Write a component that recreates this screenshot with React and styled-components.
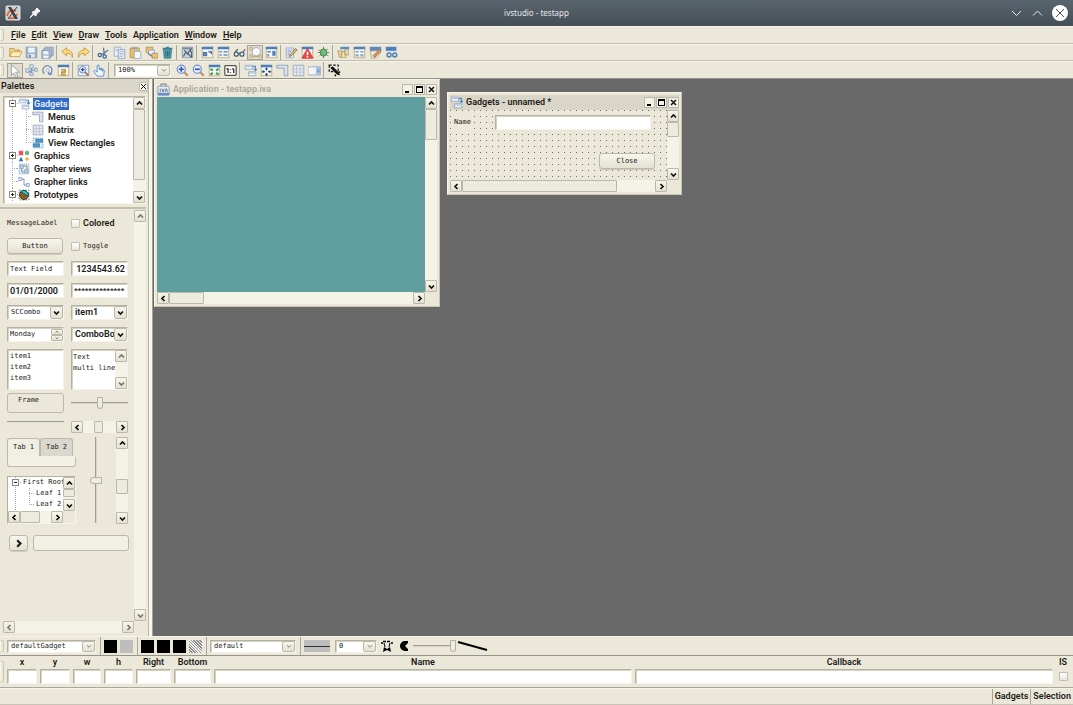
import React from "react";
import styled, { createGlobalStyle, css } from "styled-components";

const GlobalStyle = createGlobalStyle`
  * { box-sizing: border-box; }
  body {
    margin: 0;
    background: #ebe8d9;
    color: #1b1a17;
    font: 600 9px/13px Roboto, "Liberation Sans", sans-serif;
  }
  button, input, select, textarea {
    font: inherit;
    color: inherit;
    margin: 0;
    padding: 0;
    border: 0;
    border-radius: 0;
    background: none;
    outline: none;
  }
  ul { list-style: none; margin: 0; padding: 0; }
  svg { display: block; flex: none; }
`;

const mono = css`
  font-family: "DejaVu Sans Mono", "Liberation Mono", monospace;
  font-weight: 400;
  font-size: 7px;
`;

const sunken = css`
  background: #fff;
  border: 1px solid;
  border-color: #b5b2a3 #f6f4e9 #f6f4e9 #b5b2a3;
  box-shadow: inset 1px 1px 0 #d5d2c3;
`;

const raised = css`
  background: linear-gradient(#f8f6ec, #e4e1d3);
  border: 1px solid #bbb8aa;
  border-radius: 2px;
`;

const Shell = styled.div`
  display: flex;
  flex-direction: column;
  min-height: 100vh;
`;

/* ---------- title bar ---------- */

const TitleBar = styled.header`
  display: grid;
  grid-template-columns: 1fr auto 1fr;
  align-items: center;
  height: 26px;
  padding: 0 5px;
  background: linear-gradient(#59656e, #454e56);
  color: #e6e8ea;
  font: 400 8px/12px "Noto Sans", sans-serif;
`;

const TitleSide = styled.div`
  display: flex;
  align-items: center;
  gap: 8px;
  justify-content: ${(p) => (p.$end ? "flex-end" : "flex-start")};
`;

const PlainButton = styled.button`
  display: flex;
  align-items: center;
  justify-content: center;
`;

/* ---------- menu and toolbars ---------- */

const Bar = styled.div`
  display: flex;
  align-items: center;
  height: ${(p) => p.$height}px;
  border-top: 1px solid #f6f4ea;
  border-bottom: 1px solid ${(p) => (p.$dark ? "#96948a" : "#c1beb1")};
`;

const Handle = styled.span`
  flex: none;
  align-self: ${(p) => (p.$tall ? "stretch" : "center")};
  width: 4px;
  height: ${(p) => (p.$tall ? "auto" : "12px")};
  margin: ${(p) => (p.$tall ? "5px 3px 5px 0" : "0 3px 0 0")};
  border: 1px solid #c9c6b8;
  border-left-color: #f6f4ea;
  border-radius: 2px;
`;

const Menu = styled.nav`
  display: flex;
  gap: 6px;
  padding-left: 4px;
`;

const Separator = styled.span`
  flex: none;
  align-self: stretch;
  width: ${(p) => (p.$wide ? 2 : 4)}px;
  margin: ${(p) => (p.$wide ? "0 3px" : "0")};
  background: linear-gradient(90deg, transparent 1px, #a9a69a 1px, #a9a69a 2px, transparent 2px);
`;

const IconButton = styled.button`
  display: flex;
  align-items: center;
  justify-content: center;
  width: 16px;
  height: 15px;
  border: 1px solid ${(p) => (p.$active ? "#a5a295" : "transparent")};
  background: ${(p) => (p.$active ? "#e0ddce" : "none")};
`;

/* ---------- form parts ---------- */

const Field = styled.input`
  ${sunken}
  ${(p) => p.$mono && mono}
  ${(p) => p.$masked && css`font-size: 8px;`}
  width: 100%;
  min-width: 0;
  height: 15px;
  padding: 0 2px;
  text-align: ${(p) => p.$align || "left"};
`;

const ComboBox = styled.span`
  ${sunken}
  display: flex;
  align-items: center;
  width: ${(p) => (p.$width ? p.$width + "px" : "100%")};
  min-width: 0;
  height: ${(p) => (p.$width ? 13 : 15)}px;
  margin: ${(p) => (p.$spaced ? "0 3px" : "0")};

  select {
    ${(p) => p.$mono && mono}
    flex: 1;
    min-width: 0;
    height: 11px;
    padding-left: 3px;
    line-height: 11px;
    appearance: none;
    overflow: hidden;
  }
`;

const ComboArrow = styled.span`
  ${raised}
  display: flex;
  align-items: center;
  justify-content: center;
  width: 13px;
  height: ${(p) => (p.$tall ? 13 : 11)}px;
  color: ${(p) => (p.$dim ? "#77756c" : "#111")};
`;

const CheckLabel = styled.label`
  display: flex;
  align-items: center;
  gap: 3px;
  ${(p) => p.$mono && mono}
`;

const Check = styled.input`
  appearance: none;
  width: 9px;
  height: 9px;
  border: 1px solid #bfbcae;
  border-radius: 1px;
  background: linear-gradient(#fff, #e9e6da);
`;

const PushButton = styled.button`
  ${raised}
  ${mono}
  display: flex;
  align-items: center;
  justify-content: center;
  width: ${(p) => p.$width || 56}px;
  height: 16px;
  border-radius: 3px;
  box-shadow: 0 1px 0 #cfccbd;
`;

const Range = styled.input`
  appearance: none;
  width: ${(p) => (p.$vertical ? "12px" : (p.$width || 57) + "px")};
  height: ${(p) => (p.$vertical ? "86px" : "13px")};
  writing-mode: ${(p) => (p.$vertical ? "vertical-lr" : "horizontal-tb")};
  background: linear-gradient(
      ${(p) => (p.$vertical ? "90deg" : "180deg")},
      #a09d91 1px,
      #d8d5c6 1px
    )
    center / ${(p) => (p.$vertical ? "2px 100%" : "100% 2px")} no-repeat;

  &::-webkit-slider-thumb {
    appearance: none;
    width: ${(p) => (p.$vertical ? 12 : 6)}px;
    height: ${(p) => (p.$vertical ? 7 : 12)}px;
    border: 1px solid #b5b2a4;
    border-radius: ${(p) => (p.$vertical ? "5px 1px 1px 5px" : "1px 1px 4px 4px")};
    background: #eeecdf;
  }
`;

/* ---------- scroll bars ---------- */

const ScrollTrack = styled.div`
  display: flex;
  flex-direction: ${(p) => (p.$vertical ? "column" : "row")};
  width: ${(p) => (p.$vertical ? "12px" : "auto")};
  height: ${(p) => (p.$vertical ? "auto" : "12px")};
  min-width: 0;
  min-height: 0;
  background: #f5f3e7;
`;

const ScrollArrow = styled.button`
  ${raised}
  display: flex;
  align-items: center;
  justify-content: center;
  flex: none;
  width: 12px;
  height: 12px;
  border-radius: 1px;
  color: ${(p) => (p.$dim ? "#77756c" : "#111")};
`;

const ScrollRoom = styled.div`
  display: flex;
  flex: 1;
  flex-direction: inherit;
  min-width: 0;
  min-height: 0;
`;

const ScrollThumb = styled.div`
  ${raised}
  flex: none;
  border-radius: 1px;
  background: #edeade;
  ${(p) =>
    p.$vertical
      ? css`height: ${p.$size}; margin-top: ${p.$start}px;`
      : css`width: ${p.$size}; margin-left: ${p.$start}px;`}
`;

/* ---------- main area ---------- */

const Main = styled.main`
  display: flex;
  flex: 1;
`;

const Sidebar = styled.aside`
  display: flex;
  flex-direction: column;
  flex: none;
  width: 153px;
  padding-right: 4px;
  border-right: 1px solid #a5a296;
  background: linear-gradient(90deg, #ebe8d9 148px, #b9b6a8 148px, #b9b6a8 149px, #f7f5ec 149px);
`;

const PaletteTitle = styled.h2`
  display: flex;
  align-items: center;
  justify-content: space-between;
  height: 14px;
  margin: 0;
  padding: 0 0 0 1px;
  background: #d9d6c9;
  font: inherit;
`;

const SmallClose = styled.button`
  ${raised}
  display: flex;
  align-items: center;
  justify-content: center;
  width: 9px;
  height: 9px;
  background: #f7f5ec;
`;

const TreeBox = styled.div`
  ${sunken}
  display: flex;
  height: 108px;
  margin: 3px 2px 0 3px;
`;

const Tree = styled.ul`
  flex: 1;
  min-width: 0;
  padding-left: 4px;
  overflow: hidden;
  white-space: nowrap;

  > li {
    background: repeating-linear-gradient(#aaa 0 1px, transparent 1px 2px) 4px 0 / 1px 100% no-repeat;
  }

  ul {
    margin-left: 18px;
    background: repeating-linear-gradient(#aaa 0 1px, transparent 1px 2px) 0 0 / 1px calc(100% - 6px) no-repeat;
  }
`;

const TreeRow = styled.div`
  display: flex;
  align-items: center;
  height: ${(p) => p.$height || 13}px;
  ${(p) => p.$mono && mono}
`;

const Dots = styled.span`
  flex: none;
  width: ${(p) => p.$width}px;
  height: 1px;
  margin: 0 ${(p) => p.$after || 0}px 0 ${(p) => p.$indent || 0}px;
  background: repeating-linear-gradient(90deg, #aaa 0 1px, transparent 1px 2px);
`;

const Expander = styled.button`
  flex: none;
  width: 7px;
  height: 7px;
  margin: 0 1px;
  border: 1px solid #8b897f;
  background:
    linear-gradient(#222, #222) center / 3px 1px no-repeat,
    ${(p) => (p.$open ? "" : "linear-gradient(#222, #222) center / 1px 3px no-repeat,")}
    #fff;
`;

const NodeLabel = styled.span`
  margin-left: 3px;
  padding: 0 1px;
  line-height: 12px;
  background: ${(p) => (p.$selected ? "#316ac5" : "none")};
  color: ${(p) => (p.$selected ? "#e8eefa" : "inherit")};
`;

const Splitter = styled.div`
  height: 5px;
  margin-right: 2px;
  border-bottom: 2px solid #c2bfb1;
`;

const PalettePane = styled.section`
  display: grid;
  grid-template: 1fr 13px / 1fr 12px;
  flex: 1;
  padding: 1px 2px 2px 3px;
`;

const Samples = styled.div`
  display: flex;
  flex-direction: column;
  align-items: flex-start;
  padding: 6px 0 0 4px;
`;

const SampleGrid = styled.div`
  display: grid;
  grid-template-columns: 57px 57px;
  grid-auto-rows: minmax(15px, auto);
  gap: 7px;
  align-items: center;
`;

const LowerGrid = styled(SampleGrid)`
  grid-auto-rows: auto;
  gap: 8px 7px;
  margin-top: 3px;
`;

const SpinBox = styled.span`
  ${sunken}
  display: flex;
  align-items: center;
  height: 15px;

  input {
    ${mono}
    flex: 1;
    min-width: 0;
    padding-left: 2px;
  }
`;

const SpinButtons = styled.span`
  display: flex;
  flex-direction: column;

  button {
    ${raised}
    width: 12px;
    height: 6px;
    border-radius: 1px;
    display: flex;
    align-items: center;
    justify-content: center;
    color: #77756c;
  }
`;

const ListBox = styled.ul`
  ${sunken}
  ${mono}
  height: 41px;
  padding: 1px 2px;
  line-height: 11px;
`;

const TextBox = styled.div`
  ${sunken}
  display: flex;
  height: 41px;

  textarea {
    ${mono}
    flex: 1;
    min-width: 0;
    padding: 2px 0 0 1px;
    line-height: 11px;
    resize: none;
    overflow: hidden;
    white-space: pre;
  }
`;

const FrameBox = styled.div`
  ${raised}
  ${mono}
  height: 20px;
  padding-left: 10px;
  line-height: 12px;
  border-radius: 3px;
  background: none;
`;

const Rule = styled.hr`
  align-self: start;
  width: 100%;
  height: 1px;
  margin: 0;
  border: 0;
  background: #9a9a97;
`;

const MixedRow = styled.div`
  display: grid;
  grid-template-columns: 69px 12px 12px;
  column-gap: 14px;
  margin-top: 4px;
`;

const MixedColumn = styled.div`
  display: flex;
  flex-direction: column;
  gap: 9px;
  padding-top: 1px;
`;

const TabBox = styled.div`
  ${mono}
`;

const TabList = styled.div`
  display: flex;
  align-items: stretch;
  height: 18px;
`;

const Tab = styled.button`
  ${mono}
  width: 33px;
  border: 1px solid #bbb8aa;
  border-bottom: 0;
  border-radius: 3px 3px 0 0;
  background: ${(p) => (p.$active ? "#f1efe3" : "#dad7ce")};
`;

const TabPanel = styled.div`
  height: 11px;
  border: 1px solid #bbb8aa;
  border-top-color: #f1efe3;
  border-radius: 0 2px 3px 3px;
  background: #f3f1e6;
`;

const MiniTree = styled.div`
  ${sunken}
  display: grid;
  grid-template: 1fr 12px / 1fr 12px;
  height: 48px;
  background: #ebe8d9;

  > ul {
    padding-left: 3px;
    background: #fff;
  }
`;

const ActionRow = styled.div`
  display: flex;
  gap: 5px;
  margin: 11px 0 0 2px;
`;

const ProgressBox = styled.div`
  ${raised}
  width: 96px;
  height: 16px;
  border-radius: 3px;
  background: #f2f0e5;
`;

/* ---------- inner windows ---------- */

const Desktop = styled.section`
  position: relative;
  flex: 1;
  background: #696969;
`;

const InnerWindow = styled.article`
  position: absolute;
  left: ${(p) => p.$left}px;
  top: ${(p) => p.$top}px;
  display: grid;
  grid-template: 15px 1fr 12px / 1fr 12px;
  width: ${(p) => p.$width}px;
  height: ${(p) => p.$height}px;
  padding: 2px;
  border: 1px solid #f6f4e9;
  border-right-color: #c6c3b4;
  border-bottom-color: #c6c3b4;
  background: #ebe8d9;
`;

const WindowTitle = styled.header`
  grid-column: 1 / -1;
  display: flex;
  align-items: center;
  gap: 3px;
  background: ${(p) => (p.$active ? "#d9d6c8" : "none")};
  color: ${(p) => (p.$active ? "inherit" : "#aaa79a")};

  h3 {
    flex: 1;
    margin: 0;
    font: inherit;
  }
`;

const WindowButtons = styled.div`
  display: flex;
  gap: 1px;
  color: #111;

  button {
    ${raised}
    width: 11px;
    height: 11px;
    border-radius: 0;
    background: #f4f2e7;
    display: flex;
    align-items: center;
    justify-content: center;
  }
`;

const Canvas = styled.div`
  background: #609ea0;
`;

/* two striped layers leave one dark pixel in every 6px cell */
const GridCanvas = styled.form`
  display: flex;
  flex-direction: column;
  justify-content: space-between;
  padding: 5px 12px 11px 4px;
  background:
    linear-gradient(90deg, transparent 1px, #ebe8d9 1px) 0 0 / 6px 6px,
    linear-gradient(transparent 1px, #ebe8d9 1px) 0 0 / 6px 6px,
    #6f6d64;
`;

const FormLine = styled.div`
  display: grid;
  grid-template-columns: 41px 156px;
  align-items: center;

  label {
    ${mono}
    justify-self: start;
    background: #ebe8d9;
  }
`;

const FormActions = styled.div`
  display: flex;
  justify-content: flex-end;
`;

/* ---------- bottom ---------- */

const Swatches = styled.div`
  display: flex;
  gap: 3px;
`;

const Swatch = styled.button`
  width: 13px;
  height: 13px;
  background: ${(p) => p.$fill};
`;

const LinePreview = styled.button`
  width: 26px;
  height: 12px;
  margin-right: 5px;
  background: linear-gradient(#333, #333) center / 100% 1px no-repeat #bdbdbd;
`;

const DrawTools = styled.div`
  display: flex;
  align-items: center;
  gap: 1px;
  padding-left: 2px;
`;

const Properties = styled.div`
  display: flex;
  height: 32px;
  border-bottom: 1px solid #aaa89c;
`;

const PropertyGrid = styled.div`
  display: grid;
  flex: 1;
  grid-template-columns: 30px 30px 28px 29px 35px 37px 1fr 1fr 14px;
  column-gap: 3px;
  padding-right: 3px;
`;

const Property = styled.div`
  display: flex;
  flex-direction: column;
  align-items: center;
  min-width: 0;
`;

const CheckSlot = styled.div`
  display: flex;
  align-items: center;
  height: 15px;
`;

const StatusBar = styled.footer`
  display: flex;
  justify-content: flex-end;
  height: 17px;
  border-top: 1px solid #f6f4ea;
  border-bottom: 1px solid #c6c3b5;

  span {
    padding: 0 2px;
    line-height: 15px;
    border-left: 1px solid #a5a296;
  }
`;

/* ---------- drawings ---------- */

const ARROWS = {
  up: "M1 4.5 3.5 2 6 4.5",
  down: "M1 2.5 3.5 5 6 2.5",
  left: "M4.5 1 2 3.5 4.5 6",
  right: "M2.5 1 5 3.5 2.5 6",
};

const Arrow = ({ to, size = 7, thin }) => (
  <svg width={size} height={size} viewBox="0 0 7 7" fill="none" stroke="currentColor" strokeWidth={thin ? 1 : 1.7}>
    <path d={ARROWS[to]} />
  </svg>
);

const Win = ({ children }) => (
  <>
    <rect x="1.5" y="1.5" width="13" height="13" fill="#f3f5f6" stroke="#bba873" />
    <path d="M1 1h14v3H1z" fill="#4a7fbe" />
    {children}
  </>
);

const glass = (
  <>
    <path d="m10 10 4.500 4.500" stroke="#c18b52" strokeWidth="2.500" />
    <circle cx="6.500" cy="6.500" r="5" fill="#e6edff" stroke="#7792cc" strokeWidth="1.500" />
  </>
);

const ICONS = {
  open: <><path d="M1 13V3h5l1 2h6v3" fill="#f6d78c" stroke="#b78a36" /><path d="m1 13 3-6h12l-3 6z" fill="#fff0bb" stroke="#c79a43" /></>,
  save: <><path d="M1.500 1.500h13v13h-13z" fill="#a0b5d2" stroke="#7f97bb" /><path d="M4 2h8v6H4z" fill="#eff4fa" /><path d="M4 10h8v4H4z" fill="#e4e8ec" /><path d="M5 11h2v3H5z" fill="#6079a0" /></>,
  saveAll: <><path d="M5 1.500h10v10H5z" fill="#c3cfdf" stroke="#7e93b3" /><path d="M3 3.500h10v10H3z" fill="#c3cfdf" stroke="#7e93b3" /><path d="M1 5.500h10v10H1z" fill="#b0c1d9" stroke="#7e93b3" /><path d="M3 6h6v4H3zM3 12h6v3H3z" fill="#eef2f7" /></>,
  undo: <path d="m1 7 6-5v3c5 0 8 3 7 9-1-4-3-5-7-5v3z" fill="#ffdc82" stroke="#c88f2c" />,
  redo: <path d="m15 7-6-5v3c-5 0-8 3-7 9 1-4 3-5 7-5v3z" fill="#ffdc82" stroke="#c88f2c" />,
  cut: <><path d="m5 11 9-6M9 11 8 2" stroke="#5b7695" strokeWidth="1.500" /><g fill="none" stroke="#3e6797" strokeWidth="1.500"><circle cx="3.500" cy="11" r="2" /><circle cx="9.500" cy="13" r="2" /></g></>,
  copy: <><path d="M1.500 1.500h8v11h-8z" fill="#eff3fa" stroke="#8fa6ca" /><path d="M6.500 4.500h8v11h-8z" fill="#eff3fa" stroke="#7f98c0" /><path d="M3 4h5M3 6h3M8 7h5M8 9h5M8 11h5M8 13h4" stroke="#a0b3cf" /></>,
  paste: <><path d="M1.500 2.500h11v12h-11z" fill="#e5bd74" stroke="#bd8e41" /><path d="M4 1h6v3H4z" fill="#9aa6b5" /><path d="M6.500 6.500h8v9h-8z" fill="#f5f7fb" stroke="#91a6c8" /></>,
  duplicate: <><path d="M1.500 1.500h8v7h-8z" fill="#eac37b" stroke="#b88f4a" /><path d="M4.500 5h7v6h-7z" fill="#eef2fa" stroke="#809bc6" /><path d="M8.500 9h7v6h-7z" fill="#eac37b" stroke="#b88f4a" /><path d="m4 9 5 4" stroke="#447" /></>,
  trash: <><path d="M3 4h10l-1 11H4z" fill="#549daf" stroke="#32778b" /><path d="M2 2h12v2H2zM6 1h4v1H6z" fill="#3b8396" /><path d="M6 6v7M8 6v7M10 6v7" stroke="#286577" /></>,
  test: <><path d="M1.500 1.500h13v13h-13z" fill="#c6d6e6" stroke="#8a979f" /><path d="M2 2h12v2H2z" fill="#6f8aa5" /><path d="m3 13 3-6 2 3 3-5 2 3v6M4 5l9 9M10 6l3-2" fill="none" stroke="#5a6269" strokeWidth="1.500" /></>,
  inspect: <Win><path d="M3 8h4v4H3zM9 7h4v3" fill="#6d91c8" stroke="#244f97" /></Win>,
  props: <Win><path d="M3 6h3v2H3zM3 10h3v2H3zM8 6h5v2H8zM8 10h5v2H8z" fill="#6c90c4" /></Win>,
  glasses: <g fill="none" stroke="#47627b" strokeWidth="1.500"><circle cx="4" cy="10" r="2.500" /><circle cx="11" cy="10" r="2.500" /><path d="M6 9h3M2 8l4-4M12 8l3-4" /></g>,
  lasso: <><circle cx="9" cy="7" r="5" fill="#f8f9fb" stroke="#9aa5b6" /><path d="M2 13h12" stroke="#a99f83" /><path d="M1 2h3v3H1zM1 11h3v3H1zM12 11h3v3h-3z" fill="#ffedb6" stroke="#b49b63" /></>,
  panels: <Win><path d="M3 6h4v2H3zM3 10h2v3H3zM9 6h4v6H9z" fill="#4f7ec1" /></Win>,
  edit: <><path d="M1.500 2.500h9v12h-9z" fill="#edf3fc" stroke="#87a0c4" /><path d="M3 5h6M3 7h5M3 9h3M3 11h5" stroke="#7898c8" /><path d="m6 11 7-8 2 2-7 7-3 1z" fill="#e8bb64" stroke="#866f43" /></>,
  alert: <Win><path d="M8 3 1 15h14z" fill="#e84642" stroke="#d73835" /><path d="M8 7v4m0 1v2" stroke="#fff" strokeWidth="2" /></Win>,
  bug: <><path d="m2 5 12 7M3 12l10-8M8 1v14M1 8h14" stroke="#567256" /><ellipse cx="8" cy="8" rx="4" ry="4.500" fill="#75b978" stroke="#2f7848" /></>,
  script: <><path d="M4 1h11v3H4z" fill="#5c8bc2" /><path d="M9 5h5v6H9zM6 7h5v7H6z" fill="#f7edcb" stroke="#ae945d" /><path d="M1 6h5l-1 8H3z" fill="#f0d795" stroke="#ae945d" /></>,
  split: <Win><path d="M3 6h4v2H3zM9 6h4v2H9zM3 10h4v3H3zM9 10h4v3H9z" fill="#8ba7c8" /></Win>,
  pencil: <><path d="M1 1h14v5H1z" fill="#5c88c2" /><path d="M2 6h12v3l-5 6H3z" fill="#f4eddc" stroke="#aa9f82" /><path d="m5 12 8-8 2 2-8 8z" fill="#da965d" stroke="#9b6b4e" /></>,
  gears: <><path d="M1 1h13v5H1z" fill="#4a80c0" /><path d="M2 6h11v5H2z" fill="#dce5ef" /><g fill="#c6d9ef" stroke="#4c74a0" strokeWidth="1.500"><circle cx="5" cy="11" r="2.500" /><circle cx="12" cy="11" r="2.500" /></g></>,
  pointer: <path d="M3 1v13l3-3 3 5 2-1-3-5h5z" fill="#fff" stroke="#8a96a4" />,
  nodes: <><path d="M2 9c4 3 7-4 12-1M8 2v12" fill="none" stroke="#7d98bb" strokeWidth="1.500" /><path d="M6 1h4v4H6zM1 6h4v4H1zM12 5h3v4h-3zM6 11h4v3H6z" fill="#e4edf7" stroke="#7a96bb" /></>,
  rotate: <><path d="M4 12C-1 6 6-1 12 4c3 3 1 7-2 9m-1-4 1 4 4-1" fill="none" stroke="#6a86b5" strokeWidth="1.500" /><circle cx="8" cy="8" r="2" fill="#fff" stroke="#90a5c5" /></>,
  number: <Win><path d="M5 7h5v3H6v3h5" fill="none" stroke="#c69232" strokeWidth="2" /></Win>,
  zoomArea: <><path d="M1.500 1.500h13v13h-13z" fill="#edf1f7" stroke="#7d91ad" /><path d="m9 9 5 5" stroke="#a66f3d" strokeWidth="2" /><circle cx="7" cy="7" r="4" fill="#dfe9ff" stroke="#5877bd" /><path d="M5 7h4M7 5v4" stroke="#234781" strokeWidth="1.500" /></>,
  hand: <path d="M5 15 1 9l2-1 2 2V2l2-1 1 6V6l2-1v3-2l2 0v3-2l2 1-1 7z" fill="#edf4ff" stroke="#4d83cb" />,
  zoomIn: <>{glass}<path d="M3.500 6.500h6m-3-3v6" stroke="#2c55b5" strokeWidth="2" /></>,
  zoomOut: <>{glass}<path d="M3.500 6.500h6" stroke="#2c55b5" strokeWidth="2" /></>,
  fit: <Win><path d="m3 6 3 2m-3 5 3-2m7-5-3 2m3 5-3-2" stroke="#3c9a5a" strokeWidth="2.500" /></Win>,
  oneToOne: <><rect x="1" y="2" width="14" height="12" rx="1" fill="#fff" stroke="#55534c" strokeWidth="1.500" /><path d="M3 6h2v5m7-5v5m-2-5h2M8 6v1m0 3v1" fill="none" stroke="#222" strokeWidth="1.500" /></>,
  gadgets: <><path d="M1.500 1.500h9v5h-9zM5.500 9.500h9v5h-9z" fill="#f1f5fa" stroke="#91a3b9" /><path d="M2 2h8v2H2zM6 10h8v2H6z" fill="#b6cbe7" /><path d="M11 3h3v5m-2-2 2 2 2-2" fill="none" stroke="#5688bf" strokeWidth="1.500" /></>,
  move: <Win><path d="M8 5v3m0 3v3M3 9.500h3m4 0h3" stroke="#234e7b" strokeWidth="1.500" /><path d="m8 4 2 2.500H6zM8 15l2-2.500H6zM2 9.500 4.500 7.500v4zM14 9.500l-2.500-2v4z" fill="#234e7b" /></Win>,
  menus: <path d="M1 1.500h13.500v13H10V5H1z" fill="#dce3ee" stroke="#8598b5" />,
  matrix: <><path d="M1.500 1.500h13v13h-13z" fill="#e6ebf3" stroke="#929fb3" /><path d="M5.500 2v12M10 2v12M2 6h12M2 10h12" stroke="#b5bfcd" /></>,
  combo: <><path d="M0 3.500h15.500v10H0z" fill="#f3f4f4" stroke="#8da3be" /><path d="M10 4h5v9h-5z" fill="#9dbbde" /><path d="m11 8 1.500 1.500L14 8" fill="none" stroke="#4a709f" /></>,
  rects: <><path d="M1.500 1.500h13v13h-13z" fill="#e7f1fa" stroke="#4a91c0" strokeDasharray="2 1" /><path d="M5 3h9v4H5zM2 9h8v4H2z" fill="#559bd0" stroke="#28739f" /></>,
  select: <><path d="M1.500 1.500h11v8h-11z" fill="none" stroke="#111" strokeDasharray="3 2" strokeWidth="1.500" /><path d="m3 4 3-1 7 7 2 4-4-1-7-7z" fill="#111" /><path d="M8 13h2v2H8zm5-4h2v2h-2z" fill="#111" /></>,
  graphics: <><path d="M1 1h6v6H1z" fill="#ed5267" /><circle cx="12" cy="4" r="3" fill="#62b878" /><path d="m4 9 3 6H1z" fill="#316fae" /><path d="m12 9 3 3-3 3-3-3z" fill="#e8b64e" /></>,
  views: <><path d="M1.500 1.500h13v13h-13z" fill="#e8f0f7" stroke="#789cb4" strokeDasharray="2 1" /><path d="M5 7v5h4M7 4h5v5" fill="none" stroke="#56738b" /><path d="M3 3h4v4H3zM9 9h4v4H9z" fill="#d0e4f3" stroke="#6d8fac" /></>,
  links: <><path d="M3 4h5v8h5" fill="none" stroke="#58718e" /><path d="M1 2h4v4H1zM11 10h4v4h-4z" fill="#e3eefb" stroke="#6f98cc" /></>,
  proto: <><path d="M1.500 1.500h13v13h-13z" fill="none" stroke="#333" strokeDasharray="2 2" /><circle cx="8" cy="8" r="6" fill="#8f5a24" stroke="#222" /><path d="M3 4c4-4 11-1 11 5-4 0-5-4-11-5z" fill="#20d4cf" stroke="#144" /></>,
  app: <><path d="M5 4V1.500h6V4" fill="none" stroke="#8b8f92" strokeWidth="1.500" /><rect x="1" y="4" width="14" height="11" rx="1" fill="#e6ebf1" stroke="#7b91b3" /><path d="M1 12h14v3H1z" fill="#688ccc" /><path d="M4 7v4m2-4 1.500 4L9 7m1 4 1.500-4 1.500 4" fill="none" stroke="#46617f" /></>,
};

const Icon = ({ name, size = 13 }) => (
  <svg width={size} height={size} viewBox="0 0 16 16" fill="none" aria-hidden="true">
    {ICONS[name]}
  </svg>
);

/* ---------- composed parts ---------- */

const Tools = ({ items, active }) =>
  items.map((name, i) =>
    name === "|" ? (
      <Separator key={i} />
    ) : (
      <IconButton key={i} aria-label={name} $active={name === active}>
        <Icon name={name} />
      </IconButton>
    )
  );

const Scroll = ({ vertical, dim, start = 0, size }) => (
  <ScrollTrack $vertical={vertical}>
    <ScrollArrow $dim={dim} aria-label="Scroll back">
      <Arrow to={vertical ? "up" : "left"} />
    </ScrollArrow>
    <ScrollRoom>{size && <ScrollThumb $vertical={vertical} $start={start} $size={size} />}</ScrollRoom>
    <ScrollArrow $dim={dim} aria-label="Scroll on">
      <Arrow to={vertical ? "down" : "right"} />
    </ScrollArrow>
  </ScrollTrack>
);

const Combo = ({ label, value, width, isMono, dim, spaced }) => (
  <ComboBox $width={width} $mono={isMono} $spaced={spaced}>
    <select aria-label={label} defaultValue={value}>
      <option>{value}</option>
    </select>
    <ComboArrow $dim={dim} $tall={!width}>
      <Arrow to="down" size={dim ? 6 : 7} thin={dim} />
    </ComboArrow>
  </ComboBox>
);

const Node = ({ icon, label, open, leaf, selected }) => (
  <TreeRow>
    {leaf ? <Dots $width={5} $indent={4} /> : <Expander $open={open} aria-label={label} />}
    <Dots $width={1} />
    <Icon name={icon} size={12} />
    <NodeLabel $selected={selected}>{label}</NodeLabel>
  </TreeRow>
);

const ChildNode = ({ icon, label }) => (
  <TreeRow>
    <Dots $width={6} />
    <Icon name={icon} size={12} />
    <NodeLabel>{label}</NodeLabel>
  </TreeRow>
);

const WinButtons = () => (
  <WindowButtons>
    <button aria-label="Minimize">
      <svg width="7" height="7" viewBox="0 0 7 7"><path d="M1 5h4v2H1z" /></svg>
    </button>
    <button aria-label="Maximize">
      <svg width="7" height="7" viewBox="0 0 7 7"><path d="M0 0h7v7H0zm1 2v4h5V2z" fillRule="evenodd" /></svg>
    </button>
    <button aria-label="Close window">
      <svg width="7" height="7" viewBox="0 0 7 7" stroke="#111" strokeWidth="1.500"><path d="m1 1 5 5M6 1 1 6" /></svg>
    </button>
  </WindowButtons>
);

const MENUS = [
  ["", "F", "ile"],
  ["", "E", "dit"],
  ["", "V", "iew"],
  ["", "D", "raw"],
  ["", "T", "ools"],
  ["Appli", "c", "ation"],
  ["", "W", "indow"],
  ["", "H", "elp"],
];

const MAIN_TOOLS = [
  "open", "save", "saveAll", "|", "undo", "redo", "|", "cut", "copy", "paste", "duplicate", "trash", "|",
  "test", "|", "inspect", "props", "glasses", "lasso", "panels", "|", "edit", "alert", "bug", "|",
  "script", "split", "pencil", "gears",
];

const PROPERTIES = ["x", "y", "w", "h", "Right", "Bottom", "Name", "Callback"];

const Palettes = () => (
  <Sidebar>
    <PaletteTitle>
      Palettes
      <SmallClose aria-label="Close palettes">
        <svg width="5" height="5" viewBox="0 0 5 5" stroke="#111"><path d="m0 0 5 5M5 0 0 5" /></svg>
      </SmallClose>
    </PaletteTitle>
    <TreeBox>
      <Tree>
        <li>
          <Node icon="gadgets" label="Gadgets" open selected />
          <ul>
            <li><ChildNode icon="menus" label="Menus" /></li>
            <li><ChildNode icon="matrix" label="Matrix" /></li>
            <li><ChildNode icon="rects" label="View Rectangles" /></li>
          </ul>
        </li>
        <li><Node icon="graphics" label="Graphics" /></li>
        <li><Node icon="views" label="Grapher views" leaf /></li>
        <li><Node icon="links" label="Grapher links" leaf /></li>
        <li><Node icon="proto" label="Prototypes" /></li>
      </Tree>
      <Scroll vertical size="87%" />
    </TreeBox>
    <Splitter />
    <PalettePane>
      <Samples>
        <SampleGrid>
          <CheckLabel as="span" $mono>MessageLabel</CheckLabel>
          <CheckLabel><Check type="checkbox" />Colored</CheckLabel>
          <PushButton>Button</PushButton>
          <CheckLabel $mono><Check type="checkbox" />Toggle</CheckLabel>
          <Field $mono aria-label="Text field" defaultValue="Text Field" />
          <Field $align="right" aria-label="Number" defaultValue="1234543.62" />
          <Field aria-label="Date" defaultValue="01/01/2000" />
          <Field $masked aria-label="Hidden text" defaultValue="**************" />
          <Combo label="Combo" value="SCCombo" isMono />
          <Combo label="Item" value="item1" />
          <SpinBox>
            <input aria-label="Day" defaultValue="Monday" />
            <SpinButtons>
              <button aria-label="Previous day"><Arrow to="up" size={4} /></button>
              <button aria-label="Next day"><Arrow to="down" size={4} /></button>
            </SpinButtons>
          </SpinBox>
          <Combo label="Combo box" value="ComboBox" />
          <ListBox>
            <li>item1</li>
            <li>item2</li>
            <li>item3</li>
          </ListBox>
          <TextBox>
            <textarea aria-label="Multi line text" defaultValue={"Text\nmulti line"} />
            <Scroll vertical dim />
          </TextBox>
        </SampleGrid>
        <LowerGrid>
          <FrameBox>Frame</FrameBox>
          <Range type="range" aria-label="Horizontal slider" defaultValue="50" />
          <Rule />
          <Scroll start={11} size="9px" />
        </LowerGrid>
        <MixedRow>
          <MixedColumn>
            <TabBox>
              <TabList role="tablist">
                <Tab role="tab" aria-selected="true" $active>Tab 1</Tab>
                <Tab role="tab" aria-selected="false">Tab 2</Tab>
              </TabList>
              <TabPanel />
            </TabBox>
            <MiniTree>
              <Tree>
                <li>
                  <TreeRow $height={11} $mono>
                    <Expander $open aria-label="First Root" />
                    <Dots $width={2} $after={1} />
                    First Root
                  </TreeRow>
                  <ul>
                    <li><TreeRow $height={11} $mono><Dots $width={6} $after={1} />Leaf 1</TreeRow></li>
                    <li><TreeRow $height={11} $mono><Dots $width={6} $after={1} />Leaf 2</TreeRow></li>
                  </ul>
                </li>
              </Tree>
              <Scroll vertical size="8px" />
              <Scroll size="20px" />
            </MiniTree>
          </MixedColumn>
          <Range type="range" $vertical aria-label="Vertical slider" defaultValue="50" />
          <Scroll vertical start={30} size="15px" />
        </MixedRow>
        <ActionRow>
          <PushButton $width={19} aria-label="Run"><Arrow to="right" size={9} /></PushButton>
          <ProgressBox />
        </ActionRow>
      </Samples>
      <Scroll vertical dim />
      <Scroll dim />
    </PalettePane>
  </Sidebar>
);

const App = () => {
  return (
    <>
      <GlobalStyle />
      <Shell>
        <TitleBar>
          <TitleSide>
            <svg width="16" height="16" viewBox="0 0 16 16">
              <rect x="1" y="1" width="14" height="14" rx="1" fill="#cbd0d3" stroke="#e1e4e6" />
              <path d="M2 11c1-5 5-7 9-5M4 13c4 1 7-1 8-4" fill="none" stroke="#e66a31" strokeWidth="2" />
              <path d="m3 2 7 12h3L6 2z" fill="#3a4046" />
              <path d="m12 2-9 12" stroke="#3a4046" />
            </svg>
            <PlainButton aria-label="Keep above">
              <svg width="12" height="12" viewBox="0 0 12 12">
                <path d="m8 1 3 3-1 1H9L7 8v1L4.500 7.500 1 11l3-4.500L3 5h1l3-2V2z" fill="#f3f5f6" stroke="#f3f5f6" />
              </svg>
            </PlainButton>
          </TitleSide>
          <span>ivstudio - testapp</span>
          <TitleSide $end>
            <PlainButton aria-label="Minimize">
              <svg width="13" height="12" viewBox="0 0 13 12" fill="none" stroke="#e6e8ea"><path d="m2 4 4.500 4.500L11 4" /></svg>
            </PlainButton>
            <PlainButton aria-label="Maximize">
              <svg width="13" height="12" viewBox="0 0 13 12" fill="none" stroke="#e6e8ea"><path d="M2 8.500 6.500 4 11 8.500" /></svg>
            </PlainButton>
            <PlainButton aria-label="Close">
              <svg width="16" height="16" viewBox="0 0 16 16"><circle cx="8" cy="8" r="8" fill="#fcfcfc" /><path d="m4 4 8 8m0-8-8 8" stroke="#4b555d" /></svg>
            </PlainButton>
          </TitleSide>
        </TitleBar>

        <Bar $height={18}>
          <Handle />
          <Menu>
            {MENUS.map(([before, key, after]) => (
              <button key={before + key + after}>{before}<u>{key}</u>{after}</button>
            ))}
          </Menu>
        </Bar>
        <Bar $height={17}>
          <Handle />
          <Tools items={MAIN_TOOLS} active="lasso" />
        </Bar>
        <Bar $height={18} $dark>
          <Handle />
          <Tools items={["pointer", "nodes", "rotate", "number", "|", "zoomArea", "hand", "|"]} active="pointer" />
          <Combo label="Zoom" value="100%" width={57} isMono dim spaced />
          <Tools items={["zoomIn", "zoomOut", "fit", "oneToOne", "|", "gadgets", "move", "menus", "matrix", "combo", "|", "select"]} />
        </Bar>

        <Main>
          <Palettes />
          <Desktop>
            <InnerWindow $left={1} $top={0} $width={286} $height={228}>
              <WindowTitle>
                <Icon name="app" />
                <h3>Application - testapp.iva</h3>
                <WinButtons />
              </WindowTitle>
              <Canvas />
              <Scroll vertical size="31px" />
              <Scroll size="35px" />
            </InnerWindow>
            <InnerWindow $left={294} $top={13} $width={235} $height={103}>
              <WindowTitle $active>
                <Icon name="gadgets" />
                <h3>Gadgets - unnamed *</h3>
                <WinButtons />
              </WindowTitle>
              <GridCanvas onSubmit={(e) => e.preventDefault()}>
                <FormLine>
                  <label htmlFor="name">Name</label>
                  <Field id="name" />
                </FormLine>
                <FormActions>
                  <PushButton>Close</PushButton>
                </FormActions>
              </GridCanvas>
              <Scroll vertical size="15px" />
              <Scroll size="155px" />
            </InnerWindow>
          </Desktop>
        </Main>

        <Bar $height={20} $dark>
          <Handle />
          <Combo label="Gadget style" value="defaultGadget" width={89} isMono dim />
          <Separator $wide />
          <Swatches>
            <Swatch $fill="#000" aria-label="Foreground" />
            <Swatch $fill="#bdbdbd" aria-label="Background" />
          </Swatches>
          <Separator $wide />
          <Swatches>
            <Swatch $fill="#000" aria-label="Stroke" />
            <Swatch $fill="#000" aria-label="Fill" />
            <Swatch $fill="#000" aria-label="Border" />
            <Swatch $fill="repeating-linear-gradient(45deg, #8b8b8b 0 1px, #f4f4f4 1px 2px)" aria-label="Pattern" />
          </Swatches>
          <Separator $wide />
          <Combo label="Font" value="default" width={86} isMono dim />
          <Separator $wide />
          <LinePreview aria-label="Line style" />
          <Combo label="Line width" value="0" width={42} isMono dim />
          <DrawTools>
            <IconButton aria-label="Fill rule">
              <svg width="12" height="12" viewBox="0 0 12 12" fill="none" stroke="#000">
                <path d="M1 4V2M2 1.500h8M11 2v2" strokeDasharray="3 1" strokeWidth="1.500" />
                <path d="m3 3 1 4m5-4L8 7" />
                <path d="m2 12 1-5 3 2 3-2 1 5-4-2z" fill="#000" stroke="none" />
              </svg>
            </IconButton>
            <IconButton aria-label="Arc mode">
              <svg width="12" height="12" viewBox="0 0 12 12"><path d="M10 1H7a5 5 0 0 0 0 10h3V9L7 6l3-3z" /></svg>
            </IconButton>
            <Range type="range" $width={43} aria-label="Opacity" defaultValue="100" />
            <svg width="31" height="12" viewBox="0 0 31 12"><path d="m1 2 29 8" stroke="#000" strokeWidth="2" /></svg>
          </DrawTools>
        </Bar>

        <Properties>
          <Handle $tall />
          <PropertyGrid>
            {PROPERTIES.map((name) => (
              <Property key={name}>
                <label htmlFor={"prop-" + name}>{name}</label>
                <Field id={"prop-" + name} />
              </Property>
            ))}
            <Property>
              <label htmlFor="prop-is">IS</label>
              <CheckSlot>
                <Check id="prop-is" type="checkbox" />
              </CheckSlot>
            </Property>
          </PropertyGrid>
        </Properties>

        <StatusBar>
          <span>Gadgets</span>
          <span>Selection</span>
        </StatusBar>
      </Shell>
    </>
  );
};

export default App;
